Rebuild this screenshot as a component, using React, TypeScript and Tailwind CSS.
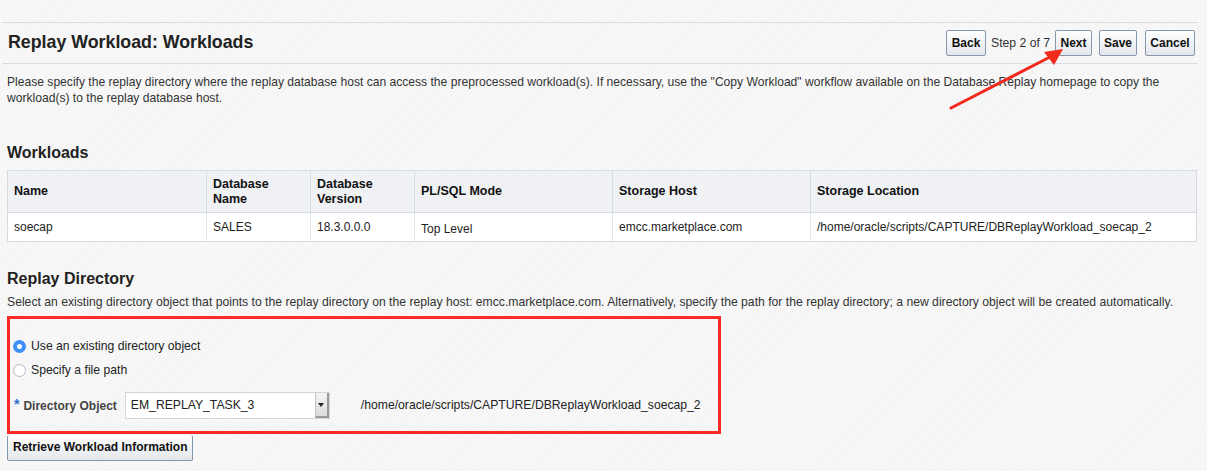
import React from "react";

const font = { fontFamily: '"Liberation Sans", Arial, Helvetica, sans-serif' };

function Btn({ label, className = "" }: { label: string; className?: string }) {
  return (
    <button
      className={`h-[26px] rounded-[2px] border border-[#8797ab] bg-gradient-to-b from-white to-[#e3e7ec] text-[12px] font-bold text-[#111] leading-none ${className}`}
    >
      {label}
    </button>
  );
}

function Radio({ checked, label }: { checked?: boolean; label: string }) {
  return (
    <label className="flex items-center gap-[5px] text-[12.2px] text-[#222] h-[18px]">
      {checked ? (
        <span className="w-[13px] h-[13px] rounded-full bg-[#3d8ef7] flex items-center justify-center">
          <span className="w-[5px] h-[5px] rounded-full bg-white" />
        </span>
      ) : (
        <span className="w-[13px] h-[13px] rounded-full bg-white border border-[#b9b9b9]" />
      )}
      {label}
    </label>
  );
}

const cols = [
  { w: "w-[198px]", head: "Name", val: "soecap" },
  { w: "w-[104px]", head: "Database|Name", val: "SALES" },
  { w: "w-[104px]", head: "Database|Version", val: "18.3.0.0.0" },
  { w: "w-[198px]", head: "PL/SQL Mode", val: "Top Level" },
  { w: "w-[198px]", head: "Storage Host", val: "emcc.marketplace.com" },
  { w: "", head: "Storage Location", val: "/home/oracle/scripts/CAPTURE/DBReplayWorkload_soecap_2" },
];

export default function App() {
  return (
    <div
      style={font}
      className="relative min-h-[471px] w-[1207px] overflow-hidden bg-[#f6f6f6] bg-[repeating-linear-gradient(135deg,#f8f8f8_0px,#f8f8f8_2px,#f3f3f3_2px,#f3f3f3_3px)] text-[#333]"
    >
      <div className="h-[22px]" />

      {/* Title bar */}
      <div className="ml-[2px] w-[1196px] h-[42px] border-t border-b border-[#d5dde6] flex items-center justify-between pl-[6px] pr-[3px]">
        <h1 className="text-[17.8px] font-bold text-[#222] leading-none">Replay Workload: Workloads</h1>
        <div className="flex items-center">
          <Btn label="Back" className="w-[40px]" />
          <span className="w-[69px] text-center text-[12.2px] text-[#333]">Step 2 of 7</span>
          <Btn label="Next" className="w-[37px]" />
          <Btn label="Save" className="ml-[7px] w-[38px]" />
          <Btn label="Cancel" className="ml-[8px] w-[50px]" />
        </div>
      </div>

      <p className="mt-[10px] ml-[7px] w-[1175px] text-[12.1px] leading-[16px] text-[#333]">
        Please specify the replay directory where the replay database host can access the preprocessed workload(s). If
        necessary, use the "Copy Workload" workflow available on the Database Replay homepage to copy the workload(s) to
        the replay database host.
      </p>

      <h2 className="mt-[38px] ml-[7px] text-[16px] font-bold text-[#222] leading-[18px]">Workloads</h2>

      {/* Table */}
      <div className="mt-[8px] ml-[7px] w-[1190px] border border-[#d5dce4] bg-white">
        <div className="flex h-[42px] bg-[#eff1f4] border-b border-[#d5dce4]">
          {cols.map((c, i) => (
            <div
              key={i}
              className={`${c.w || "flex-1"} ${i > 0 ? "border-l border-[#d5dce4]" : ""} flex items-center px-[6px] text-[12.5px] font-bold text-[#111] leading-[15px]`}
            >
              <span>
                {c.head.split("|").map((p, j) => (
                  <React.Fragment key={j}>
                    {j > 0 && <br />}
                    {p}
                  </React.Fragment>
                ))}
              </span>
            </div>
          ))}
        </div>
        <div className="flex h-[28px]">
          {cols.map((c, i) => (
            <div
              key={i}
              className={`${c.w || "flex-1"} ${i > 0 ? "border-l border-[#e2e6eb]" : ""} flex items-center px-[6px] text-[12px] text-[#222] ${i === 3 ? "pt-[3px]" : ""}`}
            >
              {c.val}
            </div>
          ))}
        </div>
      </div>

      <h2 className="mt-[28px] ml-[7px] text-[16px] font-bold text-[#222] leading-[18px]">Replay Directory</h2>
      <p className="mt-[6px] ml-[7px] text-[12.2px] leading-[16px] text-[#333] whitespace-nowrap">
        Select an existing directory object that points to the replay directory on the replay host: emcc.marketplace.com.
        Alternatively, specify the path for the replay directory; a new directory object will be created automatically.
      </p>

      {/* Highlighted region */}
      <div className="mt-[6px] ml-[7px] w-[714px] h-[118px] border-[3px] border-[#fb2a26] pt-[18px] pl-[3px]">
        <div className="flex flex-col gap-[6px]">
          <Radio checked label="Use an existing directory object" />
          <Radio label="Specify a file path" />
        </div>
        <div className="mt-[13px] flex items-center">
          <span className="ml-[1px] text-[#2f6fd6] font-bold text-[14px] leading-none mt-[-3px]">*</span>
          <span className="ml-[4px] text-[12px] font-bold text-[#444]">Directory Object</span>
          <div className="ml-[8px] w-[205px] h-[27px] flex bg-white border border-[#d6d6d6]">
            <span className="flex-1 flex items-center pl-[5px] text-[12.2px] text-[#222]">EM_REPLAY_TASK_3</span>
            <span className="w-[14px] border-l border-[#c4c4c4] bg-gradient-to-b from-[#f5f5f5] to-[#dcdcdc] border-r-2 border-r-[#9a9a9a] border-b-2 border-b-[#9a9a9a] flex items-center justify-center">
              <span className="w-0 h-0 border-l-[3px] border-r-[3px] border-t-[4px] border-l-transparent border-r-transparent border-t-[#222]" />
            </span>
          </div>
          <span className="ml-[31px] text-[12.2px] text-[#222]">/home/oracle/scripts/CAPTURE/DBReplayWorkload_soecap_2</span>
        </div>
      </div>

      <button className="ml-[7px] h-[26px] px-[5px] rounded-[2px] border border-[#8797ab] border-t-0 bg-gradient-to-b from-white to-[#e3e7ec] text-[12px] font-bold text-[#111]">
        Retrieve Workload Information
      </button>

      {/* Red annotation arrow */}
      <svg className="absolute left-0 top-0 pointer-events-none" width="1207" height="471">
        <line x1="951" y1="108" x2="1050" y2="57" stroke="#f22a1e" strokeWidth="3" strokeLinecap="round" />
        <polygon points="1063,49 1044,52 1054,65" fill="#f22a1e" />
      </svg>
    </div>
  );
}
